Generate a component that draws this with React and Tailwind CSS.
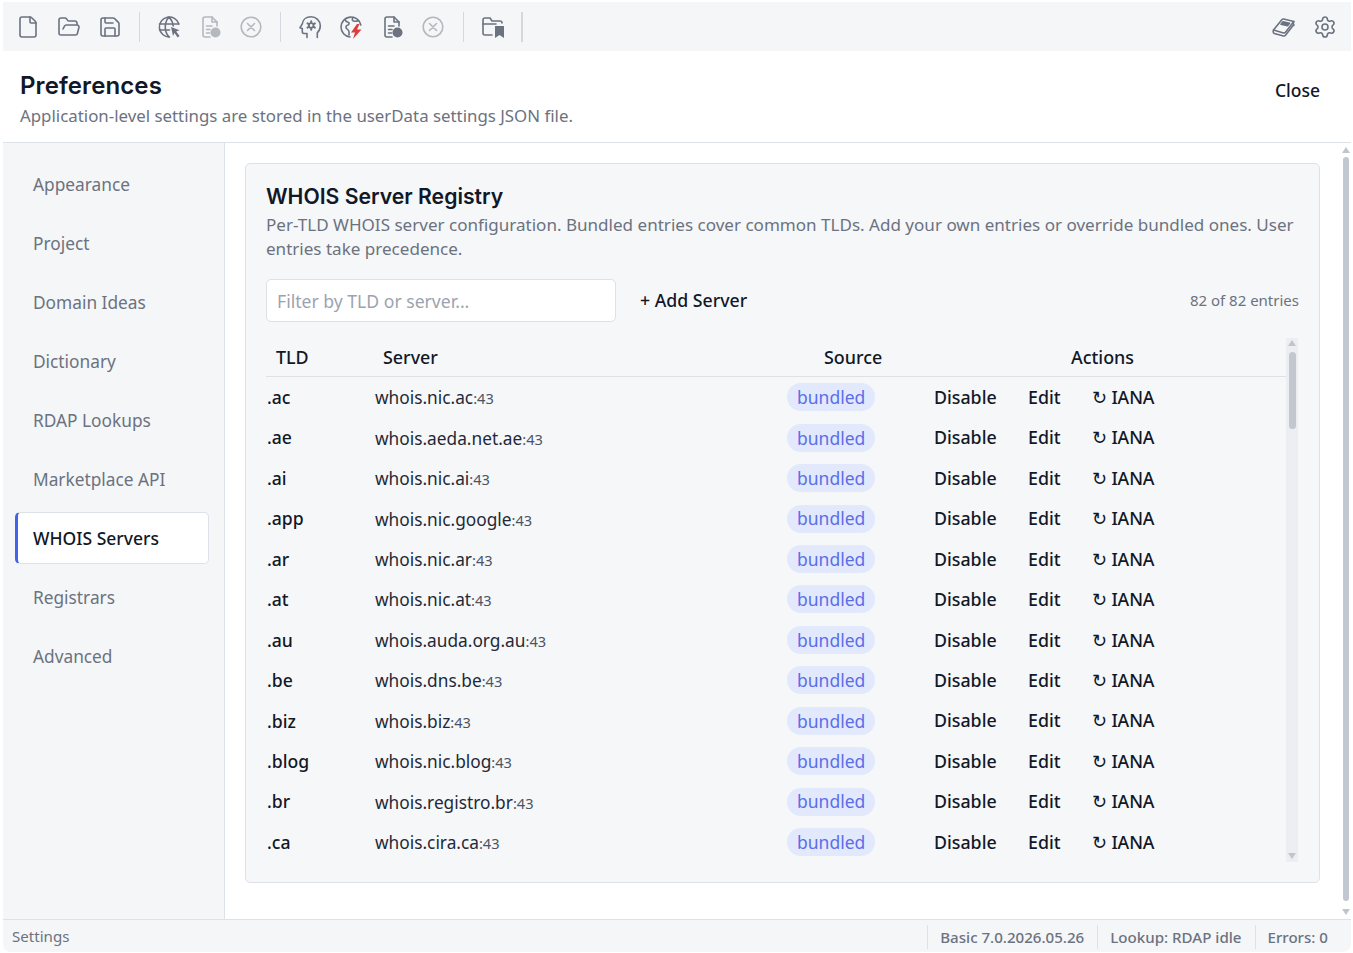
import React from "react";
import { File, FolderOpen, Save, Settings } from "lucide-react";

const NAV = [
  "Appearance",
  "Project",
  "Domain Ideas",
  "Dictionary",
  "RDAP Lookups",
  "Marketplace API",
  "WHOIS Servers",
  "Registrars",
  "Advanced",
];

const SERVERS = [
  [".ac", "whois.nic.ac"],
  [".ae", "whois.aeda.net.ae"],
  [".ai", "whois.nic.ai"],
  [".app", "whois.nic.google"],
  [".ar", "whois.nic.ar"],
  [".at", "whois.nic.at"],
  [".au", "whois.auda.org.au"],
  [".be", "whois.dns.be"],
  [".biz", "whois.biz"],
  [".blog", "whois.nic.blog"],
  [".br", "whois.registro.br"],
  [".ca", "whois.cira.ca"],
];

/* =========================
   TOOLBAR ICONS
========================= */
function Svg({ children, className = "text-[#6b7280]" }) {
  return (
    <svg
      viewBox="0 0 24 24"
      fill="none"
      stroke="currentColor"
      strokeWidth="1.6"
      strokeLinecap="round"
      strokeLinejoin="round"
      className={`w-[24px] h-[24px] ${className}`}
    >
      {children}
    </svg>
  );
}

function GlobeCursor() {
  return (
    <Svg>
      <path d="M12.500 22a10 10 0 1 1 9.400-13" />
      <path d="M2.500 9h19M2.500 15h10M12 2c-5 5.500-5 14.500 0 20M12 2c2.800 3 4 6.500 4.200 9" />
      <path d="M14 12l8.500 3.200-3.300 1.400 3.300 4.400-1.800 1.400-3.200-4.400-1.500 3z" fill="currentColor" stroke="none" />
    </Svg>
  );
}

function FileDot({ light }) {
  return (
    <Svg className={light ? "text-[#b4b8bf]" : "text-[#6b7280]"}>
      <path d="M12 22H7a2 2 0 0 1-2-2V4a2 2 0 0 1 2-2h7l5 5v4" />
      <path d="M14 2v5h5M8.500 11H14M8.500 14.500h3.500M8.500 18h3" />
      <circle cx="17.500" cy="17.500" r="5" fill="currentColor" stroke="none" />
    </Svg>
  );
}

function CircleCross() {
  return (
    <Svg className="text-[#b4b8bf]">
      <circle cx="12" cy="12" r="9.800" />
      <path d="M8.500 8.500l7 7M15.500 8.500l-7 7" />
    </Svg>
  );
}

function HeadCog() {
  return (
    <Svg>
      <path d="M9 22.500v-4H6a1.700 1.700 0 0 1-1.700-1.700v-3.300l-2.300-.8 2.300-3.900C4.800 4.500 8.500 1.800 13 1.800c5 0 9.300 3.700 9.300 9 0 3.400-1.300 5.400-3 7v4.700" />
      <circle cx="13.200" cy="10.500" r="2.300" strokeWidth="1.800" />
      <path d="M13.200 6.200v.8M13.200 14v.8M9.500 8.400l.7.400M16.200 12.200l.7.400M9.500 12.600l.7-.4M16.200 8.800l.7-.4" strokeWidth="2" />
    </Svg>
  );
}

function GlobeBolt() {
  return (
    <Svg>
      <path d="M11 22a10 10 0 1 1 10.800-12" />
      <path d="M6 4.500c.5 2 2 2.500 3.500 3 1 .5.500 2-.5 2.500-2 .5-2.500 2-1.500 3.500 1 1 2.500 1.500 2.500 3.500v3M14 2.500c-1 1.500-1 3 .5 3.500 1.500.5 3 .5 5-.5" />
      <path d="M18 9l-6 8.500h4L14 24l8.500-9.500h-4.500L20.500 9z" fill="#dc3c3c" stroke="none" />
    </Svg>
  );
}

function FolderMark() {
  return (
    <Svg>
      <path d="M11 20H4a2 2 0 0 1-2-2V5a2 2 0 0 1 2-2h5l2 3h8a2 2 0 0 1 2 2" />
      <path d="M2 9h13" />
      <path d="M14 11h9v12l-4.500-3-4.500 3z" fill="currentColor" stroke="none" />
    </Svg>
  );
}

function BookIcon() {
  return (
    <Svg>
      <path d="M1.500 15L10 4.500c.5-.5 1-.7 1.800-.5l10 2.500-8.300 10.800c-.5.600-1.200.8-2 .6z" />
      <path d="M1.500 15c-.5 1.500-.2 3 .8 3.500l9.200 2.400c.8.200 1.500 0 2-.6l8.300-10.800M21.800 6.500c-.7 1.300-.7 2.700 0 4" />
      <path d="M9 9.200l2-2.500 6.500 1.600-2 2.500z" fill="currentColor" />
    </Svg>
  );
}

function Sep({ className = "" }) {
  return <div className={`w-px h-[30px] bg-[#d5d9df] ${className}`} />;
}

function ToolBtn({ children }) {
  return <div className="w-[24px] h-[24px] flex items-center justify-center">{children}</div>;
}

function Toolbar() {
  return (
    <div className="h-[49px] bg-[#f5f6f8] flex items-center pl-[13px] pr-[14px] shrink-0">
      <div className="flex items-center gap-[17px]">
        <ToolBtn><File size={24} strokeWidth={1.6} className="text-[#6b7280]" /></ToolBtn>
        <ToolBtn><FolderOpen size={24} strokeWidth={1.6} className="text-[#6b7280]" /></ToolBtn>
        <ToolBtn><Save size={24} strokeWidth={1.6} className="text-[#6b7280]" /></ToolBtn>
        <Sep />
        <ToolBtn><GlobeCursor /></ToolBtn>
        <ToolBtn><FileDot light /></ToolBtn>
        <ToolBtn><CircleCross /></ToolBtn>
        <Sep />
        <ToolBtn><HeadCog /></ToolBtn>
        <ToolBtn><GlobeBolt /></ToolBtn>
        <ToolBtn><FileDot /></ToolBtn>
        <ToolBtn><CircleCross /></ToolBtn>
        <Sep className="ml-[1px]" />
        <ToolBtn><FolderMark /></ToolBtn>
        <div className="-ml-[1px] w-[2px] h-[30px] bg-[#d5d9df]" />
      </div>
      <div className="ml-auto flex items-center gap-[17px]">
        <ToolBtn><BookIcon /></ToolBtn>
        <ToolBtn><Settings size={24} strokeWidth={1.6} className="text-[#6b7280]" /></ToolBtn>
      </div>
    </div>
  );
}

/* =========================
   TABLE ROW
========================= */
function ServerRow({ tld, host }) {
  return (
    <div className="grid grid-cols-[108px_412px_147px_1fr] items-center h-[40.45px] pl-[1px] text-[#111827]">
      <div className="text-[17.6px] font-medium">{tld}</div>
      <div className="pt-[2px] text-[17.3px] text-[#1f2937]">
        {host}
        <span className="text-[14.6px] text-[#4b5563]">:43</span>
      </div>
      <div>
        <span className="inline-flex items-center h-[28px] px-[10px] rounded-full bg-[#e2e9fd] text-[17.5px] text-[#5b6ee8]">
          bundled
        </span>
      </div>
      <div className="flex items-center text-[17.8px] font-medium">
        <span className="w-[94px]">Disable</span>
        <span className="w-[64px]">Edit</span>
        <span className="tracking-[-0.1px]">↻ IANA</span>
      </div>
    </div>
  );
}

export default function App() {
  return (
    <div
      className="w-[1353px] h-[953px] bg-white pt-[2px] pr-[2px] pb-[1px] pl-[3px] overflow-hidden"
      style={{ fontFamily: '"Noto Sans", "Open Sans", sans-serif' }}
    >
      <div className="h-full flex flex-col rounded-b-lg overflow-hidden bg-white">
        <Toolbar />

        {/* HEADER */}
        <div className="h-[92px] shrink-0 border-b border-[#dde1e8] flex items-start justify-between pl-[17px] pr-[31px]">
          <div className="pt-[19px]">
            <h1 className="text-[24px] leading-[32px] font-semibold tracking-[0.1px] text-[#111827] font-['Inter']">Preferences</h1>
            <p className="text-[16.85px] leading-[28px] text-[#6b7280]">
              Application-level settings are stored in the userData settings JSON file.
            </p>
          </div>
          <button className="mt-[26px] text-[17.5px] font-medium text-[#111827]">Close</button>
        </div>

        <div className="flex-1 flex min-h-0">
          {/* SIDEBAR */}
          <nav className="w-[222px] shrink-0 bg-[#f5f6f8] border-r border-[#dde1e8] pt-[15px] pl-[12px] pr-[15px] flex flex-col gap-[7px]">
            {NAV.map((item) => (
              <div
                key={item}
                className={
                  item === "WHOIS Servers"
                    ? "h-[52px] flex items-center pl-[15px] text-[17.5px] font-medium text-[#111827] bg-white border border-[#dde1e8] border-l-[3px] border-l-[#4263eb] rounded-[5px]"
                    : "h-[52px] flex items-center pl-[18px] pt-[2px] text-[17.3px] text-[#6b7280]"
                }
              >
                {item}
              </div>
            ))}
          </nav>

          {/* CONTENT */}
          <main className="flex-1 min-w-0 pt-[20px] pl-[20px] pr-[21px]">
            <section className="h-[720px] bg-[#f6f7f9] border border-[#dde1e8] rounded-[5px] pt-[18px] pl-[20px] pr-[20px]">
              <h2 className="text-[21.2px] leading-[28px] font-semibold text-[#111827] font-['Inter']">WHOIS Server Registry</h2>
              <p className="mt-[3px] text-[17.06px] leading-[24px] text-[#6b7280]">
                Per-TLD WHOIS server configuration. Bundled entries cover common TLDs. Add your own entries or override bundled ones. User entries take precedence.
              </p>

              <div className="mt-[18px] flex items-center">
                <input
                  placeholder="Filter by TLD or server..."
                  className="w-[350px] h-[43px] px-[10px] bg-white border border-[#dde1e8] rounded-[5px] text-[17.6px] placeholder:text-[#9ca3af]"
                />
                <span className="ml-[24px] text-[17.7px] font-medium text-[#111827]">+ Add Server</span>
                <span className="ml-auto text-[15px] text-[#6b7280]">82 of 82 entries</span>
              </div>

              <div className="mt-[16px] flex">
                <div className="w-[1020px] shrink-0">
                  <div className="grid grid-cols-[107px_441px_247px_1fr] items-center h-[39px] pl-[10px] border-b border-[#dde1e8] text-[17.9px] font-medium text-[#111827]">
                    <div>TLD</div>
                    <div>Server</div>
                    <div>Source</div>
                    <div>Actions</div>
                  </div>
                  {SERVERS.map(([tld, host]) => (
                    <ServerRow key={tld} tld={tld} host={host} />
                  ))}
                </div>

                {/* TABLE SCROLLBAR */}
                <div className="w-[12px] h-[524px] bg-[#eceef2] flex flex-col items-center pt-[2px] pb-[2px]">
                  <div className="w-0 h-0 border-x-[4px] border-x-transparent border-b-[6px] border-b-[#c0c5cd]" />
                  <div className="mt-[6px] w-[7px] h-[77px] rounded-full bg-[#c2c7d0]" />
                  <div className="mt-auto mb-[1px] w-0 h-0 border-x-[4px] border-x-transparent border-t-[6px] border-t-[#c0c5cd]" />
                </div>
              </div>
            </section>
          </main>

          {/* PAGE SCROLLBAR */}
          <div className="w-[10px] shrink-0 flex flex-col items-center pt-[4px] pb-[4px]">
            <div className="w-0 h-0 border-x-[4px] border-x-transparent border-b-[6px] border-b-[#c0c5cd]" />
            <div className="mt-[4px] w-[6px] h-[744px] rounded-full bg-[#c2c7d0]" />
            <div className="mt-auto w-0 h-0 border-x-[4px] border-x-transparent border-t-[6px] border-t-[#c0c5cd]" />
          </div>
        </div>

        {/* STATUS BAR */}
        <footer className="h-[33px] shrink-0 bg-[#f5f6f8] border-t border-[#dde1e8] flex items-center pt-[1px] pl-[9px] pr-[23px] text-[15.1px] text-[#6b7280]">
          <span>Settings</span>
          <div className="ml-auto flex items-center">
            <span className="border-l border-[#dde1e8] pl-[12px] pr-[13px] leading-[24px] font-medium">Basic 7.0.2026.05.26</span>
            <span className="border-l border-[#dde1e8] pl-[12px] pr-[13px] leading-[24px] font-medium">Lookup: RDAP idle</span>
            <span className="border-l border-[#dde1e8] pl-[12px] leading-[24px] font-medium">Errors: 0</span>
          </div>
        </footer>
      </div>
    </div>
  );
}
